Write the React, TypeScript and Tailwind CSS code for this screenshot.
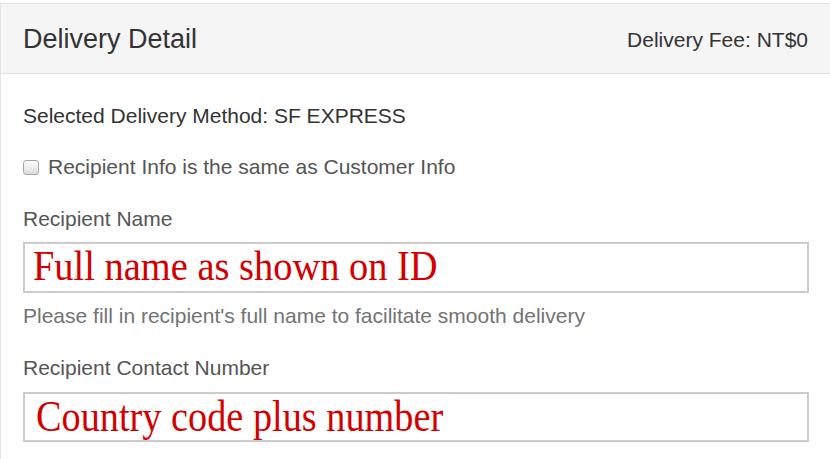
export default function App() {
  return (
    <div className="w-[830px] h-[459px] bg-white pt-[3px] overflow-hidden" style={{ fontFamily: '"Liberation Sans", Arial, sans-serif' }}>
      <div className="border-l border-t border-[#e3e3e3] h-full">
        <div className="h-[70px] bg-[#f5f5f5] border-b border-[#e3e3e3] flex items-center justify-between pl-[22px] pr-[22px] text-[#333]">
          <div className="text-[27px] leading-none pt-[1px]">Delivery Detail</div>
          <div className="text-[21px] leading-none pt-[2px]">Delivery Fee: NT$0</div>
        </div>
        <div className="pl-[22px] pr-[21px] pt-[27px] text-[21px] leading-[30px]">
          <div className="text-[#333]">Selected Delivery Method: SF EXPRESS</div>
          <div className="mt-[21px] flex items-center text-[#555]">
            <span className="w-[16px] h-[15px] rounded-[3px] border border-[#a6a6a6] bg-gradient-to-b from-white to-[#dcdcdc] mr-[9px]" />
            <span>Recipient Info is the same as Customer Info</span>
          </div>
          <div className="mt-[22px] text-[#555]">Recipient Name</div>
          <div className="mt-[8px] h-[51px] border-2 border-[#cccccc] bg-white overflow-hidden pl-[8px] pt-[1px]">
            <span
              className="inline-block origin-left scale-x-[0.915] text-[42px] leading-[42px] text-[#d40000] whitespace-nowrap"
              style={{ fontFamily: '"Liberation Serif", "Times New Roman", serif' }}
            >
              Full name as shown on ID
            </span>
          </div>
          <div className="mt-[8px] text-[#737373]">Please fill in recipient's full name to facilitate smooth delivery</div>
          <div className="mt-[22px] text-[#555]">Recipient Contact Number</div>
          <div className="mt-[9px] h-[50px] border-2 border-[#cccccc] bg-white overflow-hidden pl-[11px] pt-[1px]">
            <span
              className="inline-block origin-left scale-x-[0.87] text-[44px] leading-[44px] text-[#d40000] whitespace-nowrap"
              style={{ fontFamily: '"Liberation Serif", "Times New Roman", serif' }}
            >
              Country code plus number
            </span>
          </div>
        </div>
      </div>
    </div>
  );
}
